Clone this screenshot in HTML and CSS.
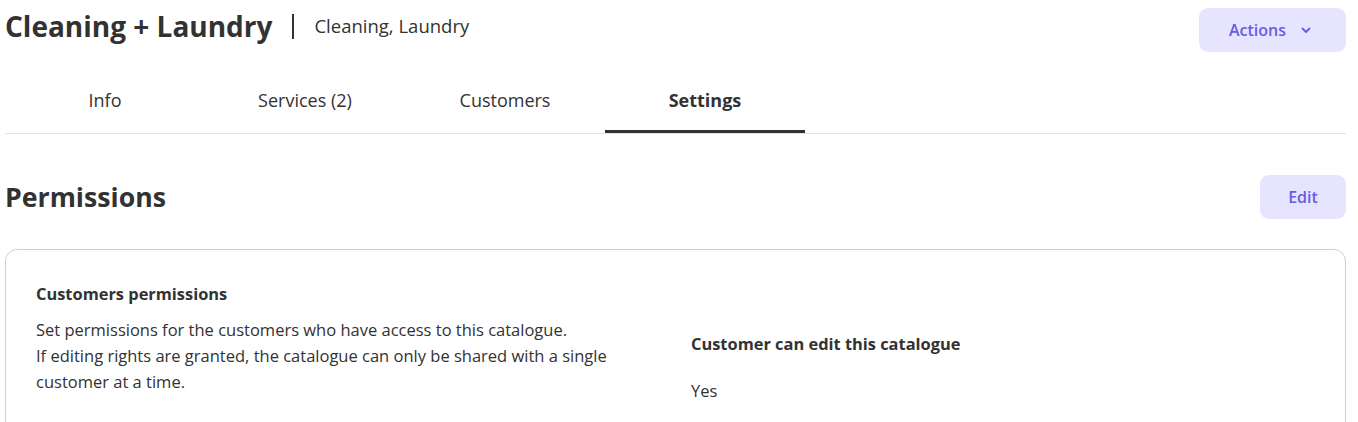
FILE: index.html
```html
<!DOCTYPE html>
<html lang="en">
<head>
<meta charset="utf-8">
<title>Cleaning + Laundry</title>
<link rel="stylesheet" href="styles.css">
</head>
<body>
<div class="page">
  <header class="header">
    <div class="title-group">
      <h1 class="title">Cleaning + Laundry</h1>
      <span class="divider"></span>
      <span class="subtitle">Cleaning, Laundry</span>
    </div>
    <button class="btn btn-actions">Actions
      <svg class="chev" width="12" height="12" viewBox="0 0 12 12"><path d="M2.5 4.5 L6 8 L9.5 4.5" fill="none" stroke="currentColor" stroke-width="1.8" stroke-linecap="round" stroke-linejoin="round"/></svg>
    </button>
  </header>
  <nav class="tabs">
    <div class="tab">Info</div>
    <div class="tab">Services (2)</div>
    <div class="tab">Customers</div>
    <div class="tab active">Settings</div>
  </nav>
  <section class="section-head">
    <h2 class="section-title">Permissions</h2>
    <button class="btn btn-edit">Edit</button>
  </section>
  <div class="card">
    <div class="col-left">
      <h3 class="card-title">Customers permissions</h3>
      <p class="card-desc">Set permissions for the customers who have access to this catalogue.<br>If editing rights are granted, the catalogue can only be shared with a single customer at a time.</p>
    </div>
    <div class="col-right">
      <div class="field-label">Customer can edit this catalogue</div>
      <div class="field-value">Yes</div>
    </div>
  </div>
</div>
</body>
</html>
```
FILE: styles.css
```css
* { box-sizing: border-box; }
html, body { margin: 0; padding: 0; background: #fff; }
body {
  font-family: "Open Sans", "Noto Sans", sans-serif;
  color: #323232;
}
.page { padding: 0 12px 0 5px; }
.header {
  display: flex;
  justify-content: space-between;
  align-items: flex-start;
  padding-top: 8px;
}
.title-group { display: flex; align-items: center; height: 36px; }
.title { margin: 0; font-size: 28px; font-weight: 700; line-height: 36px; }
.divider { width: 2px; height: 25px; background: #323232; margin: 0 20px; }
.subtitle { font-size: 18.5px; line-height: 36px; }
.btn {
  border: none;
  background: #e7e4ff;
  color: #6a5be6;
  font-family: inherit;
  font-size: 16px;
  font-weight: 600;
  border-radius: 9px;
  height: 44px;
  display: inline-flex;
  align-items: center;
  justify-content: center;
}
.btn-actions { width: 147px; gap: 14px; padding-right: 10px; }
.chev { display: block; }
.btn-edit { width: 86px; }
.tabs { display: flex; border-bottom: 1px solid #e2e2e2; margin-top: 20px; }
.tab {
  width: 200px;
  text-align: center;
  font-size: 18px;
  height: 61px;
  line-height: 56px;
  color: #323232;
}
.tab.active { font-weight: 700; border-bottom: 3px solid #323232; }
.section-head {
  display: flex;
  justify-content: space-between;
  align-items: center;
  margin-top: 40px;
}
.section-title { margin: 0; font-size: 26.7px; font-weight: 700; line-height: 45px; }
.card {
  margin-top: 30px;
  border: 1px solid #cfcfcf;
  border-radius: 12px;
  padding: 33px 30px 30px;
  display: flex;
  min-height: 200px;
}
.col-left { width: 655px; }
.card-title { margin: 0; font-size: 16.4px; font-weight: 700; line-height: 22px; }
.card-desc { margin: 12px 0 0; font-size: 16.5px; line-height: 26px; max-width: 600px; }
.col-right { padding-top: 50px; }
.field-label { font-size: 16.4px; font-weight: 700; line-height: 22px; }
.field-value { font-size: 16.5px; line-height: 22px; margin-top: 25px; }
```
